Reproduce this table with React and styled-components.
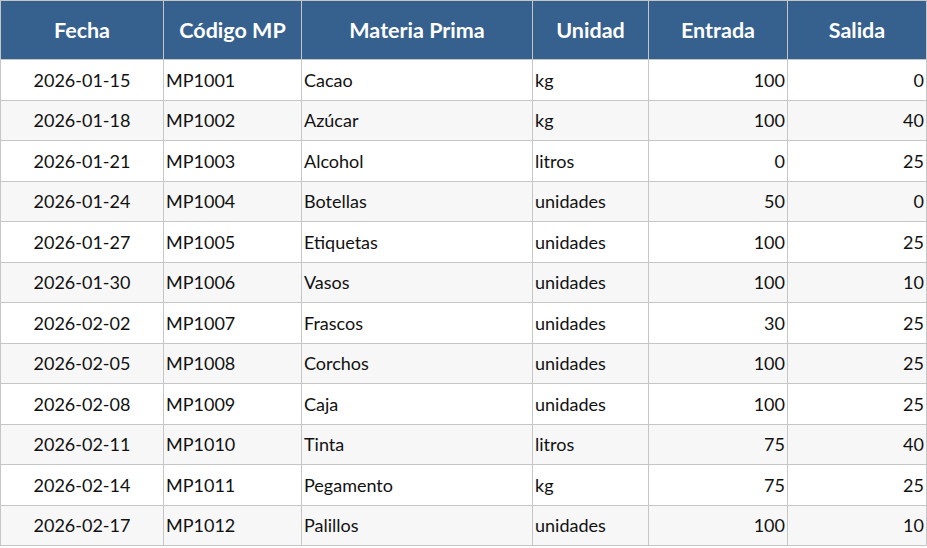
import React from 'react'
import styled, { createGlobalStyle } from 'styled-components'

const GlobalStyle = createGlobalStyle`
    html, body {
        margin: 0;
        padding: 0;
        background: #ffffff;
    }
`

const Table = styled.table`
    width: 926px;
    border-collapse: collapse;
    table-layout: fixed;
    font-family: Lato, "Liberation Sans", sans-serif;
    color: #111111;
`

const HeadCell = styled.th`
    height: 58px;
    padding: 0;
    background: #36618f;
    color: #ffffff;
    font-size: 21.5px;
    font-weight: 700;
    text-align: center;
    border: 1px solid #c6c6c6;
`

const Row = styled.tr`
    background: ${props => props.$striped ? '#f7f7f7' : '#ffffff'};
`

const Cell = styled.td`
    height: 39.5px;
    padding: 0 2px 0 2px;
    font-size: 18px;
    font-weight: 400;
    text-align: ${props => props.$align || 'left'};
    border: 1px solid #c6c6c6;
    white-space: nowrap;
`

const columns = [
    { label: 'Fecha', width: 163, align: 'center' },
    { label: 'Código MP', width: 138, align: 'left' },
    { label: 'Materia Prima', width: 231, align: 'left' },
    { label: 'Unidad', width: 116, align: 'left' },
    { label: 'Entrada', width: 139, align: 'right' },
    { label: 'Salida', width: 139, align: 'right' },
]

const rows = [
    ['2026-01-15', 'MP1001', 'Cacao', 'kg', 100, 0],
    ['2026-01-18', 'MP1002', 'Azúcar', 'kg', 100, 40],
    ['2026-01-21', 'MP1003', 'Alcohol', 'litros', 0, 25],
    ['2026-01-24', 'MP1004', 'Botellas', 'unidades', 50, 0],
    ['2026-01-27', 'MP1005', 'Etiquetas', 'unidades', 100, 25],
    ['2026-01-30', 'MP1006', 'Vasos', 'unidades', 100, 10],
    ['2026-02-02', 'MP1007', 'Frascos', 'unidades', 30, 25],
    ['2026-02-05', 'MP1008', 'Corchos', 'unidades', 100, 25],
    ['2026-02-08', 'MP1009', 'Caja', 'unidades', 100, 25],
    ['2026-02-11', 'MP1010', 'Tinta', 'litros', 75, 40],
    ['2026-02-14', 'MP1011', 'Pegamento', 'kg', 75, 25],
    ['2026-02-17', 'MP1012', 'Palillos', 'unidades', 100, 10],
]

function App() {

    return (
        <>
            <GlobalStyle />
            <Table>
                <colgroup>
                    {columns.map(col => <col key={col.label} style={{width: col.width}} />)}
                </colgroup>
                <thead>
                    <tr>
                        {columns.map(col => <HeadCell key={col.label}>{col.label}</HeadCell>)}
                    </tr>
                </thead>
                <tbody>
                    {rows.map((row, i) => (
                        <Row key={row[1]} $striped={i % 2 === 1}>
                            {row.map((value, j) => (
                                <Cell key={j} $align={columns[j].align}>{value}</Cell>
                            ))}
                        </Row>
                    ))}
                </tbody>
            </Table>
        </>
    )
}

export default App
